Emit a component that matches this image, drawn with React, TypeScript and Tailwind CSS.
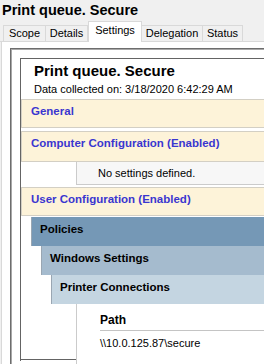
import React from 'react';

const TABS = [
  { label: 'Scope', width: 'w-[43px] border-l', active: false },
  { label: 'Details', width: 'w-[42px]', active: false },
  { label: 'Settings', width: 'w-[54px]', active: true },
  { label: 'Delegation', width: 'w-[61px]', active: false },
  { label: 'Status', width: 'w-[40px]', active: false },
];

const YellowBand: React.FC<{ title: string; tall?: boolean }> = ({ title, tall }) => (
  <div
    className={`border-y border-l border-[#d3cfc4] bg-[#fdf3d9] pl-[9px] pt-[4px] ${tall ? 'pb-[11px]' : 'pb-[9px]'}`}
  >
    <div className="text-[11.5px] font-bold leading-[14px] text-[#3a36d0]">{title}</div>
  </div>
);

const BlueBand: React.FC<{ title: string; indent: string; bg: string }> = ({ title, indent, bg }) => (
  <div className={`${indent} ${bg} border-l border-[#9aa6b2] pl-[8px] pt-[5px] pb-[10px]`}>
    <div className="text-[11.5px] font-bold leading-[14px] text-black">{title}</div>
  </div>
);

export default function App() {
  return (
    <div className="flex h-[364px] w-[264px] flex-col overflow-hidden bg-[#f0f0f0] font-['Liberation_Sans',Arial,sans-serif] text-black">
      <div className="h-[21px] shrink-0 pl-[2px] pt-[2px] text-[14.5px] font-bold leading-[17px]">
        Print queue. Secure
      </div>

      {/* tab strip */}
      <div className="flex h-[21px] shrink-0 items-end text-[11px] leading-[13px]">
        <div className="h-px w-[3px] border-b border-[#d9d9d9]" />
        {TABS.map((t) =>
          t.active ? (
            <div
              key={t.label}
              className={`${t.width} h-[21px] shrink-0 border-x border-t border-[#d9d9d9] bg-white pt-[2px] text-center`}
            >
              {t.label}
            </div>
          ) : (
            <div
              key={t.label}
              className={`${t.width} h-[17px] shrink-0 border-y border-r border-[#d9d9d9] bg-[#f0f0f0] pt-[1px] text-center`}
            >
              {t.label}
            </div>
          )
        )}
        <div className="h-px flex-1 border-b border-[#d9d9d9]" />
      </div>

      {/* tab page */}
      <div className="ml-[1px] flex flex-1 flex-col border-l border-[#d9d9d9] bg-white pl-[8px] pt-[6px]">
        <div className="w-[400px] flex-1 border-l border-t border-[#6d6d6d]">
          <div className="h-full border-l border-t border-[#a8a8a8] pl-[8px] pt-[8px]">
            <div className="h-[303px] w-[380px] border-l border-t border-[#646464]">
              <div className="pb-[3px] pl-[13px] pt-[3px]">
                <div className="text-[15px] font-bold leading-[17px]">Print queue. Secure</div>
                <div className="mt-[4px] text-[11px] leading-[13px]">
                  Data collected on: 3/18/2020 6:42:29 AM
                </div>
              </div>

              <YellowBand title="General" />
              <div className="mt-[3px]">
                <YellowBand title="Computer Configuration (Enabled)" tall />
              </div>
              <div className="ml-[55px] border-b border-l border-[#cbcbcb] bg-[#f7f7f7] pb-[4px] pl-[21px] pt-[5px] text-[11px] leading-[13px]">
                No settings defined.
              </div>
              <div className="mt-[2px]">
                <YellowBand title="User Configuration (Enabled)" />
              </div>

              <div className="mt-px">
                <BlueBand title="Policies" indent="ml-[10px]" bg="bg-[#7598b6]" />
                <BlueBand title="Windows Settings" indent="ml-[20px]" bg="bg-[#a5bbce]" />
                <BlueBand title="Printer Connections" indent="ml-[30px]" bg="bg-[#c4d5e1]" />
              </div>

              <div className="flex items-start">
                <div className="h-[56px] w-[55px] shrink-0 border-b border-[#646464]" />
                <div className="h-[70px] flex-1 border-l border-[#cbcbcb] bg-white pl-[23px] pt-[9px]">
                  <div className="border-b border-[#c4c4c4] pb-[3px] text-[12px] font-bold leading-[14px]">
                    Path
                  </div>
                  <div className="mt-[6px] text-[11px] leading-[13px]">\\10.0.125.87\secure</div>
                </div>
              </div>
            </div>
          </div>
        </div>
      </div>
    </div>
  );
}
